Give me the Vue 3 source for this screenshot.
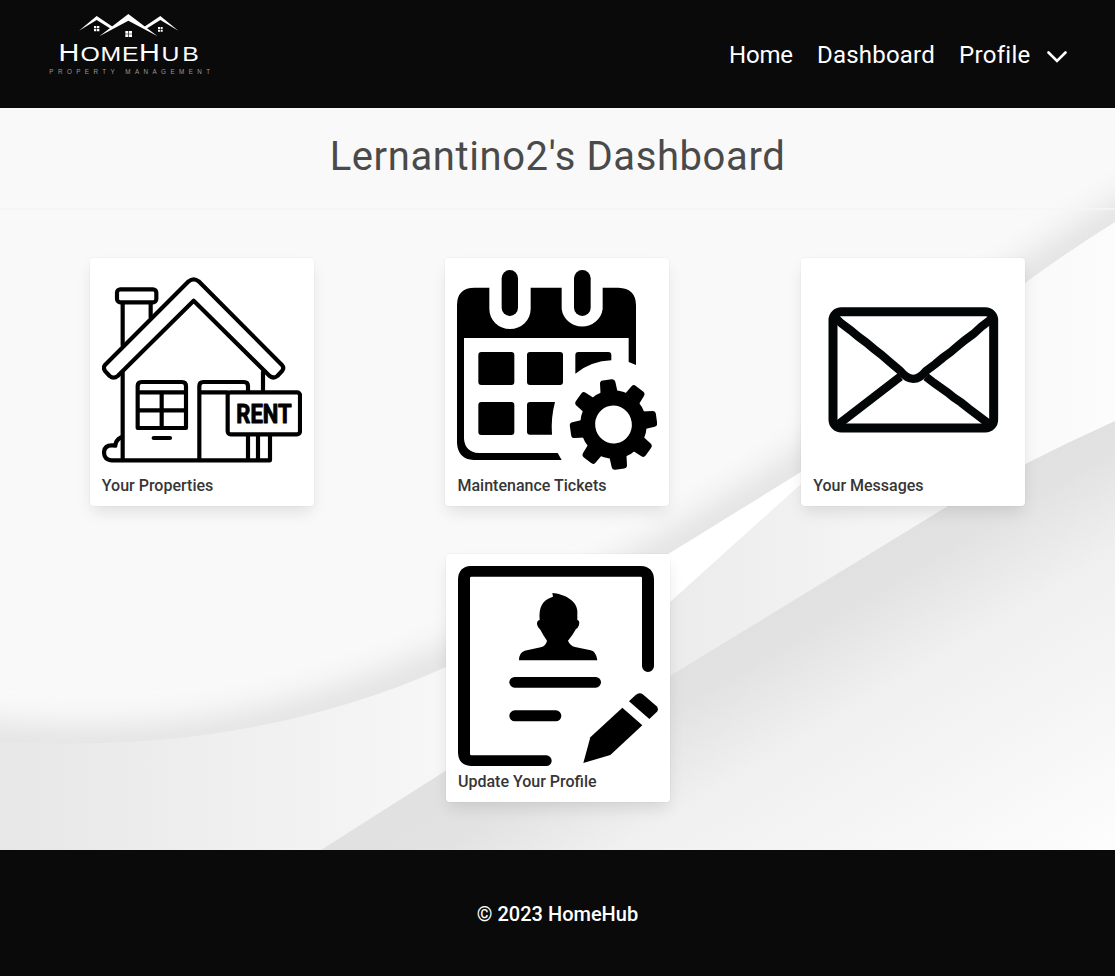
<script setup>
const links = [
  { label: 'Home', cls: 'home' },
  { label: 'Dashboard', cls: 'dash' },
  { label: 'Profile', cls: 'profile' },
]
const teeth = [0, 45, 90, 135, 180, 225, 270, 315]
</script>

<template>
  <div class="page">
    <header class="nav">
      <svg class="logo" viewBox="0 0 600 324" aria-label="HomeHub">
        <g fill="#fff">
          <path d="M147 92 L200 48 L248 80 L242 86 L200 60 Z" />
          <path d="M445 92 L391 48 L343 80 L349 86 L391 60 Z" />
          <path d="M208 109 L295 42 L383 109 L295 62 Z" />
          <path d="M192 78h7v7h-7zM201 78h7v7h-7zM192 87h7v7h-7zM201 87h7v7h-7z" />
          <path d="M384 81h6v6h-6zM392 81h6v6h-6zM384 89h6v6h-6zM392 89h6v6h-6z" />
          <path d="M286 93h9v8h-9zM297 93h9v8h-9zM286 103h9v8h-9zM297 103h9v8h-9z" />
        </g>
        <text class="brand" transform="scale(1.2 1)" y="182"><tspan x="71.5" font-size="72">H</tspan><tspan x="126 176 230" font-size="62">OME</tspan><tspan x="272.5" font-size="72">H</tspan><tspan x="328.5 380.5" font-size="62">UB</tspan></text>
        <text class="tagline" x="58" y="222" textLength="482">PROPERTY MANAGEMENT</text>
      </svg>
      <nav class="links">
        <a v-for="l in links" :key="l.label" :class="['link', l.cls]">{{ l.label }}</a>
        <svg class="chev" viewBox="0 0 20 12"><path d="M1.5 1.5 L10 10 L18.5 1.5" fill="none" stroke="#fff" stroke-width="2.6" stroke-linecap="round" /></svg>
      </nav>
    </header>

    <main class="main">
      <svg class="backdrop" viewBox="0 108 1115 742" preserveAspectRatio="none" aria-hidden="true">
        <defs>
          <linearGradient id="bandLeft" gradientUnits="userSpaceOnUse" x1="0" y1="0" x2="446" y2="0">
            <stop offset="0" stop-color="#e7e7e7" /><stop offset="1" stop-color="#f7f7f7" />
          </linearGradient>
          <linearGradient id="bandRight" gradientUnits="userSpaceOnUse" x1="660" y1="0" x2="1115" y2="0">
            <stop offset="0" stop-color="#ebebeb" /><stop offset=".45" stop-color="#f4f4f4" /><stop offset=".8" stop-color="#f9f9f9" /><stop offset="1" stop-color="#fcfcfc" />
          </linearGradient>
          <linearGradient id="lower" gradientUnits="userSpaceOnUse" x1="700" y1="658" x2="892" y2="982">
            <stop offset="0" stop-color="#e1e1e1" /><stop offset=".08" stop-color="#e2e2e2" /><stop offset=".32" stop-color="#f0f0f0" /><stop offset=".6" stop-color="#f5f5f5" /><stop offset="1" stop-color="#fdfdfd" />
          </linearGradient>
          <filter id="soft" x="-10%" y="-20%" width="120%" height="140%"><feGaussianBlur stdDeviation="16" /></filter>
        </defs>
        <rect y="108" width="1115" height="742" fill="#f9f9f9" />
        <path d="M-60 736 C160 768 310 726 446 667 C530 635 600 595 670 553 C715 527 760 500 801 472 C880 415 960 325 1025 283 Q1070 252 1170 190" fill="none" stroke="#cfcfcf" stroke-opacity=".58" stroke-width="38" filter="url(#soft)" />
        <path d="M0 741.5 C160 751 310 728 446 667 V850 H0 Z" fill="url(#bandLeft)" />
        <path d="M446 667 C530 635 600 595 670 553 C715 527 760 500 801 472 C880 415 960 325 1025 283 Q1070 250 1115 222 V850 H446 Z" fill="url(#bandRight)" />
        <path d="M446 667 C530 635 600 595 670 553 L801 472 L850 440 L801 484 L670 602 L560 690 Z" fill="#fff" />
        <path d="M321 850 L446 770.5 C530 740 600 718 670 676 L948 506 Q1030 459 1115 421 V850 Z" fill="url(#lower)" />
      </svg>

      <h1 class="title"><span>Lernantino2's Dashboard</span></h1>

      <div class="grid">
        <article class="card">
          <svg class="art" viewBox="66 60 600 600">
            <g fill="none" stroke="#000" stroke-width="12.5" stroke-linejoin="round" stroke-linecap="round">
              <rect x="111" y="118" width="118" height="39" rx="10" />
              <path d="M128 160V286M212 160V202" />
              <path d="M75 345 L326 94 Q341 82 356 94 L605 344 Q614 354 606 363 L592 378 Q581 387 569 378 L341 152 L113 378 Q101 388 89 378 L76 364 Q68 354 75 345 Z" />
              <path d="M128 368V630M549 366V424" />
              <path d="M173 534V408Q173 396 185 396H306Q318 396 318 408V534ZM173 427H318M245 427V532M173 481H318" />
              <path d="M221 564H270" />
              <path d="M358 630V408Q358 396 370 396H492Q504 396 504 408V424M358 427H442" />
              <rect x="443" y="427" width="217" height="126" rx="9" />
              <path d="M504 557V630M534 557V630M570 557V631H94Q72 629 72 606Q74 585 97 586L106 587Q107 570 123 562" />
            </g>
            <text class="sign" x="469" y="518" textLength="166" lengthAdjust="spacingAndGlyphs">RENT</text>
          </svg>
          <p class="label l1">Your Properties</p>
        </article>

        <article class="card">
          <svg class="art" viewBox="66 60 600 600">
            <path d="M66 166Q66 113 119 113H163V177A62 60 0 0 0 287 177V113H380V177A62 60 0 0 0 503 177V113H550Q603 115 603 166V345L581 336V264H87V566Q90 606 131 609H368L380 630H116Q69 628 66 579Z" />
            <rect x="200" y="60" width="49" height="138" rx="24.500" />
            <rect x="417" y="60" width="50" height="138" rx="25" />
            <rect x="130" y="306" width="108" height="99" rx="9" />
            <rect x="276" y="306" width="108" height="99" rx="9" />
            <rect x="130" y="456" width="108" height="99" rx="9" />
            <path d="M421 371V315Q421 306 430 306H520Q529 306 529 315V331Q469 333 421 371Z" />
            <path d="M360 456H285Q276 456 276 465V545Q276 554 285 554H351Q347 505 360 456Z" />
            <g transform="translate(535.5 523.5) rotate(-8) scale(.965 1)">
              <circle r="80" fill="none" stroke="#000" stroke-width="46" />
              <path v-for="a in teeth" :key="a" :transform="`rotate(${a})`" d="M-27 -92 L-24 -126 Q-23 -135 -14 -135 H14 Q23 -135 24 -126 L27 -92 Z" />
            </g>
          </svg>
          <p class="label l2">Maintenance Tickets</p>
        </article>

        <article class="card">
          <svg class="art" viewBox="69 60 600 600">
            <g fill="none" stroke="#030606">
              <rect x="129" y="185" width="482" height="349" rx="25" stroke-width="27" />
              <g stroke-width="25">
                <path d="M137 204 L155 221 L182 241 L205 260 L228 277 L252 297 L274 314 L298 335 L330 362 Q370 411 409 362 L436 342 L459 323 L481 307 L501 290 L525 270 L550 252 L574 230 L603 208" />
                <path d="M144 524 L331 380M408 380 L431 398 L452 413 L472 427 L492 443 L514 458 L535 475 L596 521" />
              </g>
            </g>
          </svg>
          <p class="label l3">Your Messages</p>
        </article>

        <article class="card wide">
          <svg class="art" viewBox="69 63 600 600">
            <path d="M107 63H618Q655 65 657 102V363A18 18 0 0 1 621 363V99Q621 95 617 95H109Q105 95 105 99V627Q105 631 109 631H334A16 16 0 0 1 334 663H107Q71 661 69 624V102Q71 65 107 63Z" />
            <path d="M352 144C386 146 427 168 427 198V225Q435 227 432 240Q429 249 423 252Q412 272 399 287Q405 302 420 306L467 316Q484 320 487 346H252Q251 324 269 317L317 307Q333 303 336 287Q324 270 316 254Q308 249 306 238Q305 227 314 225C311 187 321 165 354 155Z" />
            <rect x="223" y="396" width="275" height="32" rx="16" />
            <rect x="223" y="496" width="156" height="33" rx="16.500" />
            <path d="M562 488L622 541L526 630L445 654L466 577Z" />
            <path d="M582 469L602 450Q613 440 625 449L665 484Q672 492 666 500L643 522Z" />
          </svg>
          <p class="label l4">Update Your Profile</p>
        </article>
      </div>
    </main>

    <footer class="footer"><span>© 2023 HomeHub</span></footer>
  </div>
</template>

<style>
body { background: #0a0a0a; }
</style>

<style scoped>
.page { width: 1115px; height: 976px; display: flex; flex-direction: column; font-family: Roboto, "Open Sans", sans-serif; overflow: hidden; }
.nav { height: 108px; flex: none; box-sizing: border-box; padding: 0 48px 0 30px; display: flex; justify-content: space-between; background: #0a0a0a; color: #fff; }
.logo { width: 200px; height: 108px; }
.brand { font-family: "Liberation Sans", Arial, sans-serif; fill: #fff; }
.tagline { font-family: "Liberation Sans", Arial, sans-serif; font-size: 19px; fill: #999; letter-spacing: -.5px; }
.links { display: flex; align-items: flex-start; padding-top: 37px; }
.link { font-size: 24px; line-height: 36px; white-space: nowrap; }
.home { width: 88px; letter-spacing: -.2px; }
.dash { width: 142px; letter-spacing: .2px; }
.profile { width: 88px; letter-spacing: .3px; }
.chev { width: 20px; height: 12px; margin-top: 14px; }
.main { position: relative; height: 742px; flex: none; }
.backdrop { position: absolute; inset: 0; width: 1115px; height: 742px; }
.title { position: relative; box-sizing: border-box; height: 102px; margin: 0; padding-top: 19px; border-bottom: 2px solid rgba(245, 245, 245, .8); text-align: center; font-size: 40px; line-height: 60px; font-weight: 400; color: #4a4a4a; letter-spacing: .6px; }
.grid { position: relative; display: grid; grid-template-columns: repeat(3, 1fr); row-gap: 48px; padding: 48px 24px; justify-items: center; }
.card { box-sizing: border-box; width: 224px; height: 248px; padding: 12px; background: #fff; border-radius: 4px; box-shadow: 0 8px 16px -2px rgba(10, 10, 10, .1), 0 0 0 1px rgba(10, 10, 10, .02); }
.wide { grid-column: 1 / -1; margin-left: 1px; }
.art { display: block; width: 200px; height: 200px; overflow: hidden; }
.sign { font-family: Roboto, sans-serif; font-weight: 700; font-size: 80px; stroke: #000; stroke-width: 3; stroke-linejoin: round; }
.label { margin: 0; height: 24px; line-height: 31px; font-size: 16px; font-weight: 500; color: #363636; white-space: nowrap; }
.footer { height: 126px; flex: none; display: flex; justify-content: center; padding-top: 49px; box-sizing: border-box; background: #0a0a0a; color: #fff; font-size: 20px; line-height: 30px; font-weight: 500; }
</style>
